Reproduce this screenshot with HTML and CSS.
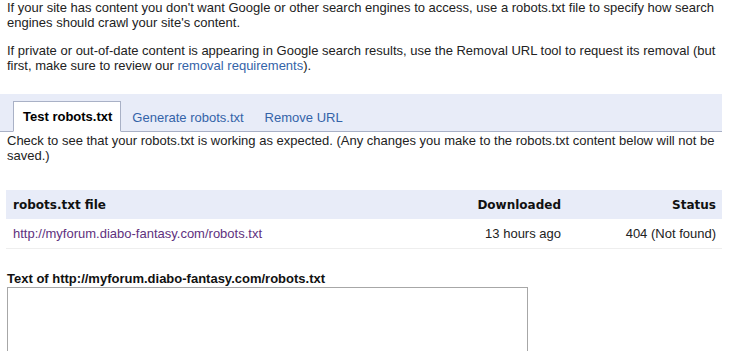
FILE: index.html
```html
<!DOCTYPE html>
<html lang="en">
<head>
    <meta charset="UTF-8">
    <title>Crawler access</title>
    <link rel="stylesheet" href="styles.css">
</head>
<body>
    <div class="page">
        <p class="intro">If your site has content you don't want Google or other search engines to access, use a robots.txt file to specify how search engines should crawl your site's content.</p>
        <p class="intro">If private or out-of-date content is appearing in Google search results, use the Removal URL tool to request its removal (but first, make sure to review our <a href="#">removal requirements</a>).</p>

        <div class="tabs">
            <span class="tab active">Test robots.txt</span>
            <a class="tab" href="#">Generate robots.txt</a>
            <a class="tab" href="#">Remove URL</a>
        </div>

        <p class="note">Check to see that your robots.txt is working as expected. (Any changes you make to the robots.txt content below will not be saved.)</p>

        <table class="files">
            <colgroup>
                <col class="col-file">
                <col class="col-downloaded">
                <col class="col-status">
            </colgroup>
            <thead>
                <tr>
                    <th class="file">robots.txt file</th>
                    <th class="num">Downloaded</th>
                    <th class="num">Status</th>
                </tr>
            </thead>
            <tbody>
                <tr>
                    <td class="file"><a class="visited" href="#">http://myforum.diabo-fantasy.com/robots.txt</a></td>
                    <td class="num">13 hours ago</td>
                    <td class="num">404 (Not found)</td>
                </tr>
            </tbody>
        </table>

        <label class="text-label" for="robots-text">Text of http://myforum.diabo-fantasy.com/robots.txt</label>
        <textarea id="robots-text" class="robots-text"></textarea>
    </div>
</body>
</html>
```

FILE: styles.css
```css
body {
    margin: 0;
    font-family: 'Liberation Sans', Arial, sans-serif;
    font-size: 13px;
    color: #222;
    background-color: #ffffff;
}
a {
    color: #3463a8;
    text-decoration: none;
}
.page {
    width: 722px;
}
.intro {
    margin: 0 0 13px;
    padding-left: 7px;
}
.tabs {
    display: flex;
    align-items: flex-end;
    margin-top: 21px;
    height: 37px;
    padding-left: 13px;
    background-color: #e8ecf8;
    border-bottom: 1px solid #a9b1c6;
}
.tab {
    display: block;
    padding: 0 10px 0 11px;
    line-height: 29px;
    margin-bottom: -1px;
}
.tabs .active {
    padding: 0 8px 0 9px;
    font-weight: bold;
    color: #000;
    background-color: #ffffff;
    border: 1px solid #a9b1c6;
    border-bottom: 1px solid #ffffff;
}
.note {
    margin: 1px 0 0;
    padding: 0 7px 0 7px;
}
.files {
    margin: 27px 0 0 6px;
    width: 716px;
    table-layout: fixed;
    border-collapse: collapse;
}
.col-file {
    width: 441px;
}
.col-downloaded {
    width: 120px;
}
.col-status {
    width: 155px;
}
.files th {
    height: 29px;
    padding: 0 7px;
    font-family: 'DejaVu Sans', Verdana, sans-serif;
    font-size: 12px;
    font-weight: bold;
    color: #111;
    background-color: #e8ecf8;
}
.files td {
    height: 29px;
    padding: 0 7px;
    border-bottom: 1px solid #eeeeee;
}
.files .file {
    text-align: left;
}
.files .num {
    text-align: right;
    padding-right: 6px;
}
.visited {
    color: #60317e;
}
.text-label {
    display: block;
    margin: 22px 0 0 7px;
    font-weight: bold;
    color: #111;
}
.robots-text {
    display: block;
    margin: 1px 0 0 7px;
    width: 521px;
    height: 120px;
    padding: 2px;
    box-sizing: border-box;
    border: 1px solid #a7a7a7;
    resize: none;
}
```
